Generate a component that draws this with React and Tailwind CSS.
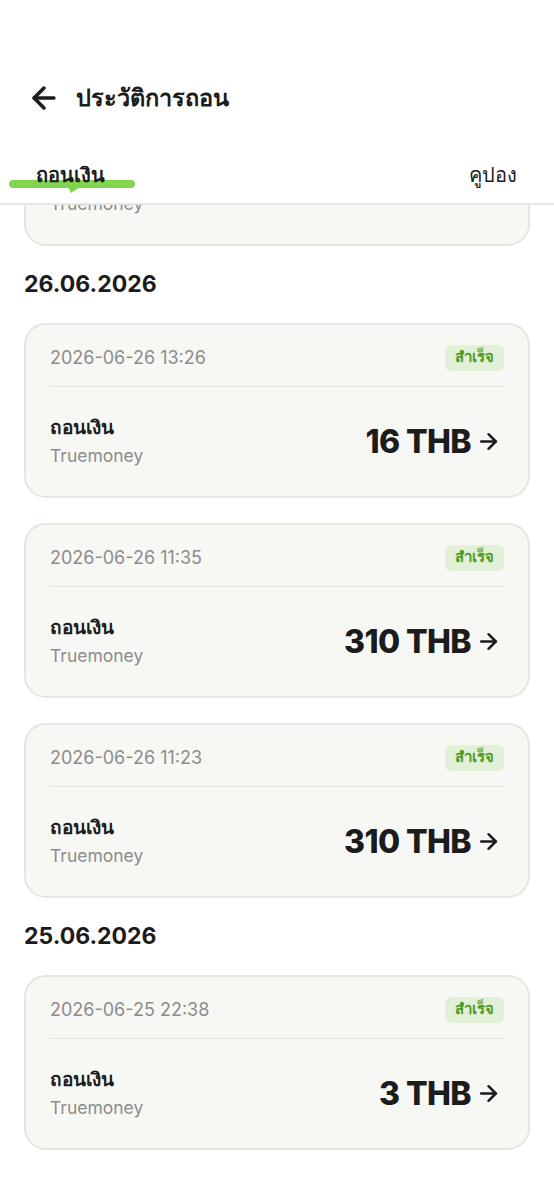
import { ArrowLeft, ArrowRight } from "lucide-react";

const FONT = { fontFamily: "Inter, 'Noto Sans', 'DejaVu Sans', sans-serif" };

const groups = [
  { date: null, items: [{ time: "2026-06-26 13:40", amount: "50" }] },
  {
    date: "26.06.2026",
    items: [
      { time: "2026-06-26 13:26", amount: "16" },
      { time: "2026-06-26 11:35", amount: "310" },
      { time: "2026-06-26 11:23", amount: "310" },
    ],
  },
  { date: "25.06.2026", items: [{ time: "2026-06-25 22:38", amount: "3" }] },
];

function Card({ time, amount }) {
  return (
    <div className="rounded-[22px] border-2 border-[#e4e7df] bg-[#f7f8f4] px-[24px]">
      <div className="h-[62px] flex items-center justify-between pt-[4px] border-b border-[#e4e6e0]">
        <span className="text-[18px] leading-[26px] text-[#8c8c8c]">{time}</span>
        <span className="h-[26px] px-[10px] rounded-[6px] bg-[#e1f0d6] text-[#4f9b1e] text-[15px] font-semibold flex items-center">
          สำเร็จ
        </span>
      </div>
      <div className="h-[109px] flex items-center justify-between">
        <div className="flex flex-col">
          <span className="text-[19px] leading-[28px] font-bold text-[#1c1c1c]">ถอนเงิน</span>
          <span className="text-[17.5px] leading-[28px] text-[#8c8c8c]">Truemoney</span>
        </div>
        <div className="flex items-center gap-[5px] pr-[3px]">
          <span className="text-[32px] leading-[40px] font-extrabold tracking-[-0.6px] text-[#1c1c1c]">{amount} THB</span>
          <ArrowRight size={25} strokeWidth={2.4} className="text-[#1c1c1c]" />
        </div>
      </div>
    </div>
  );
}

export default function App() {
  return (
    <div className="w-[554px] h-[1200px] bg-white overflow-hidden flex flex-col" style={FONT}>
      <div className="pt-[78px] pl-[27px] h-[120px] flex items-start">
        <div className="h-[40px] flex items-center gap-[15px]">
          <ArrowLeft size={34} strokeWidth={2.5} className="text-[#1c1c1c]" />
          <span className="text-[23.5px] font-bold text-[#1c1c1c]">ประวัติการถอน</span>
        </div>
      </div>
      <div className="h-[85px] flex items-end justify-between pb-[13px] pl-[36px] pr-[37px] border-b-2 border-[#e6e6e6]">
        <div className="relative h-[30px] flex items-center">
          <span className="relative z-10 text-[20px] font-bold text-[#1c1c1c]">ถอนเงิน</span>
          <svg className="absolute left-[-28px] top-[19px]" width="128" height="16" viewBox="0 0 128 16">
            <rect x="1" y="1" width="126" height="8" rx="4" fill="#7fd54e" />
            <path d="M60 8 L72 8 L63 14 Z" fill="#7fd54e" />
          </svg>
        </div>
        <span className="h-[30px] flex items-center text-[20px] text-[#1c1c1c]">คูปอง</span>
      </div>
      <div className="flex-1 overflow-hidden px-[24px]">
        <div className="flex flex-col mt-[-134px]">
          {groups.map((g, gi) => (
            <div key={gi} className="flex flex-col">
              {g.date && (
                <div className="h-[77px] flex items-center text-[23px] font-bold text-[#1c1c1c]">{g.date}</div>
              )}
              <div className="flex flex-col gap-[25px]">
                {g.items.map((it, i) => (
                  <Card key={i} {...it} />
                ))}
              </div>
            </div>
          ))}
        </div>
      </div>
    </div>
  );
}
